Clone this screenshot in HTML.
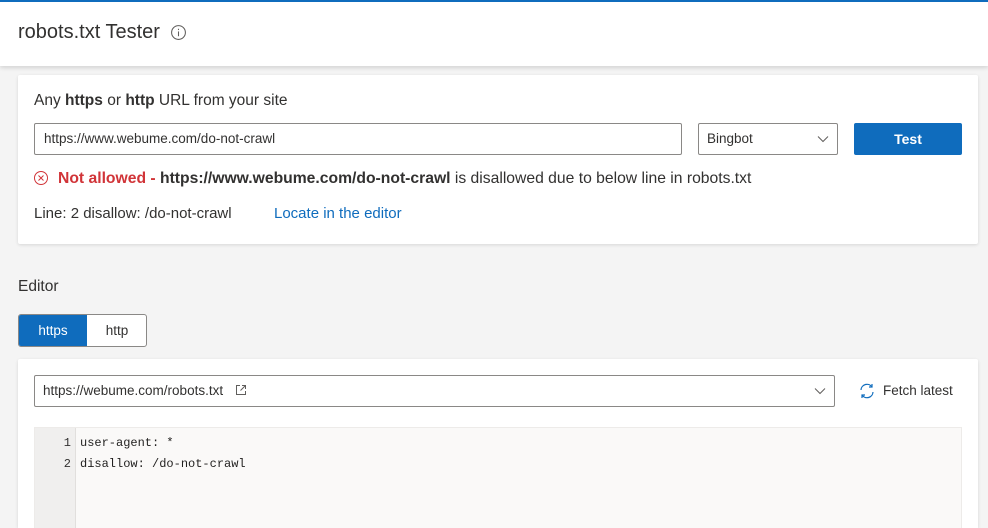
<!DOCTYPE html>
<html><head><style>
*{box-sizing:border-box;margin:0;padding:0}
html,body{width:988px;height:528px;overflow:hidden}
body{background:#f4f4f4;font-family:"Liberation Sans",sans-serif;color:#323130;position:relative}
.hdr{position:absolute;left:0;top:0;width:988px;height:66px;background:#fff;border-top:2px solid #0f6cbd;box-shadow:0 2px 4px rgba(0,0,0,.13)}
.hdr h1{position:absolute;left:18px;top:19px;font-size:20px;font-weight:normal;color:#323130}
.card{position:absolute;background:#fff;border-radius:2px;box-shadow:0 1px 3px rgba(0,0,0,.12);overflow:hidden}
.abs{position:absolute;white-space:nowrap}
.inp{position:absolute;border:1px solid #8a8886;border-radius:2px;background:#fff;font-size:13.5px}
</style></head><body>
<div class="hdr"><h1>robots.txt Tester</h1>
<svg class="abs" style="left:170px;top:22px" width="17" height="17" viewBox="0 0 16 16"><circle cx="8" cy="8" r="6.5" fill="none" stroke="#605e5c" stroke-width="1"/><rect x="7.5" y="7" width="1" height="4.5" fill="#605e5c"/><rect x="7.5" y="4.5" width="1" height="1.2" fill="#605e5c"/></svg>
</div>
<div class="card" style="left:18px;top:75px;width:960px;height:169px">
<div class="abs" style="left:16px;top:17px;font-size:15.5px">Any <b>https</b> or <b>http</b> URL from your site</div>
<div class="inp" style="left:16px;top:48px;width:648px;height:32px;padding:7px 9px">https://www.webume.com/do-not-crawl</div>
<div class="inp" style="left:680px;top:48px;width:140px;height:32px;padding:7px 8px">Bingbot
<svg class="abs" style="right:8px;top:10px" width="12" height="10" viewBox="0 0 12 10"><path d="M1 2.5l5 5 5-5" fill="none" stroke="#605e5c"/></svg></div>
<div class="abs" style="left:836px;top:48px;width:108px;height:32px;background:#0f6cbd;color:#fff;border-radius:2px;font-size:14px;font-weight:bold;text-align:center;line-height:32px">Test</div>
<svg class="abs" style="left:15px;top:95px" width="16" height="16" viewBox="0 0 16 16"><circle cx="8" cy="8" r="6.5" fill="none" stroke="#d13438"/><path d="M5.5 5.5l5 5M10.5 5.5l-5 5" stroke="#d13438"/></svg>
<div class="abs" style="left:40px;top:95px;font-size:15.7px"><b style="color:#d13438">Not allowed -</b> <b>https://www.webume.com/do-not-crawl</b> is disallowed due to below line in robots.txt</div>
<div class="abs" style="left:16px;top:130px;font-size:15px">Line: 2 disallow: /do-not-crawl</div>
<div class="abs" style="left:256px;top:130px;font-size:15px;color:#0f6cbd">Locate in the editor</div>
</div>
<div class="abs" style="left:18px;top:278px;font-size:15.5px">Editor</div>
<div class="abs" style="left:18px;top:314px;width:129px;height:33px;border:1px solid #8a8886;border-radius:3px;background:#fff;overflow:hidden;font-size:13.5px">
<div class="abs" style="left:0;top:0;width:68px;height:31px;background:#0f6cbd;color:#fff;text-align:center;line-height:31px">https</div>
<div class="abs" style="left:68px;top:0;width:60px;height:31px;text-align:center;line-height:31px">http</div></div>
<div class="card" style="left:18px;top:359px;width:960px;height:169px;border-radius:2px 2px 0 0">
<div class="inp" style="left:16px;top:16px;width:801px;height:32px;padding:7px 8px">https://webume.com/robots.txt
<svg style="margin-left:8px;vertical-align:-1px" width="12" height="12" viewBox="0 0 12 12"><path d="M5 1.5H1.5v9h9V7M7 1.5h3.5V5M10.5 1.5l-5 5" fill="none" stroke="#605e5c"/></svg>
<svg class="abs" style="right:8px;top:10px" width="12" height="10" viewBox="0 0 12 10"><path d="M1 2.5l5 5 5-5" fill="none" stroke="#605e5c"/></svg></div>
<svg class="abs" style="left:840px;top:23px" width="18" height="18" viewBox="0 0 18 18"><path d="M3 8a6 6 0 0 1 11-3M15 10a6 6 0 0 1-11 3" fill="none" stroke="#0f6cbd" stroke-width="1.2"/><path d="M14 2v3h-3M4 16v-3h3" fill="none" stroke="#0f6cbd" stroke-width="1.2"/></svg>
<div class="abs" style="left:865px;top:24px;font-size:13.5px">Fetch latest</div>
<div class="abs" style="left:16px;top:68px;width:928px;height:120px;background:#faf9f8;border:1px solid #edebe9">
<div class="abs" style="left:0;top:0;width:41px;height:120px;background:#f0efee;border-right:1px solid #e1dfdd"></div>
<div class="abs" style="left:0;top:5px;width:36px;text-align:right;font-family:'Liberation Mono',monospace;font-size:12px;line-height:21px;color:#323130">1<br>2</div>
<div class="abs" style="left:45px;top:5px;font-family:'Liberation Mono',monospace;font-size:12px;line-height:21px;color:#201f1e">user-agent: *<br>disallow: /do-not-crawl</div>
</div></div>
</body></html>
